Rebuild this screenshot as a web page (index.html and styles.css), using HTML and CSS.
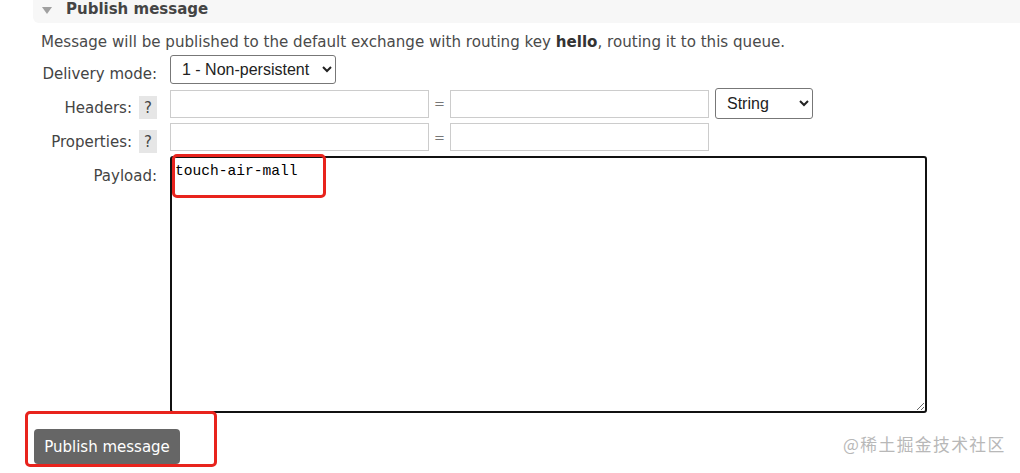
FILE: index.html
```html
<!DOCTYPE html>
<html>
<head>
<meta charset="utf-8">
<link rel="stylesheet" href="styles.css">
</head>
<body>
<div class="section">
  <div class="section-head">
    <span class="tri"></span>
    <h2>Publish message</h2>
  </div>
  <div class="section-body">
    <p class="desc">Message will be published to the default exchange with routing key <b>hello</b>, routing it to this queue.</p>
    <div class="form">
      <label class="lbl lbl-mode">Delivery mode:</label>
      <div class="field">
        <select class="sel sel-mode"><option>1 - Non-persistent</option><option>2 - Persistent</option></select>
      </div>

      <label class="lbl lbl-headers">Headers: <span class="help">?</span></label>
      <div class="field kv">
        <input class="txt" type="text"><span class="eq">=</span><input class="txt" type="text">
        <select class="sel sel-type"><option>String</option><option>Number</option><option>Boolean</option></select>
      </div>

      <label class="lbl lbl-props">Properties: <span class="help">?</span></label>
      <div class="field kv">
        <input class="txt" type="text"><span class="eq">=</span><input class="txt" type="text">
      </div>

      <label class="lbl lbl-payload">Payload:</label>
      <div class="field payload-wrap">
        <textarea class="payload">touch-air-mall</textarea>
        <span class="mark mark-text"></span>
      </div>
    </div>
    <div class="actions">
      <button class="btn">Publish message</button>
      <span class="mark mark-btn"></span>
    </div>
  </div>
  <div class="watermark">@稀土掘金技术社区</div>
</div>
</body>
</html>
```

FILE: styles.css
```css
html, body {
  margin: 0;
  padding: 0;
  background: #fff;
}
body {
  font-family: "DejaVu Sans", Verdana, sans-serif;
  color: #484848;
  width: 1020px;
  height: 473px;
  overflow: hidden;
}
.section {
  position: relative;
  margin-left: 33px;
  height: 473px;
}
.section-head {
  display: flex;
  align-items: center;
  height: 23px;
  background: #f7f7f7;
  border-bottom-left-radius: 6px;
  padding-left: 9px;
}
.tri {
  width: 0;
  height: 0;
  border-left: 5px solid transparent;
  border-right: 5px solid transparent;
  border-top: 7px solid #a0a0a0;
  margin-top: -3px;
  margin-right: 14px;
}
.section-head h2 {
  margin: 0;
  font-size: 15px;
  font-weight: bold;
  color: #444;
  margin-top: -5px;
}
.section-body {
  padding-left: 8px;
}
.desc {
  margin: 0;
  padding-top: 10px;
  font-size: 15.1px;
  line-height: 18px;
  color: #4a4a4a;
}
.desc b {
  color: #333;
}
.form {
  display: grid;
  grid-template-columns: 116px 1fr;
  column-gap: 13px;
  row-gap: 4px;
  margin-top: 4px;
  align-items: start;
}
.lbl {
  font-size: 15px;
  line-height: 18px;
  color: #444;
  text-align: right;
  display: flex;
  justify-content: flex-end;
  align-items: center;
  gap: 7px;
  white-space: nowrap;
  margin-bottom: -6px;
}
.lbl-mode {
  padding-top: 10px;
}
.lbl-headers {
  padding-top: 8px;
}
.lbl-props {
  padding-top: 7px;
}
.lbl-payload {
  padding-top: 12px;
}
.help {
  display: inline-flex;
  align-items: center;
  justify-content: center;
  width: 18px;
  height: 23px;
  background: #e6e6e6;
  color: #444;
  font-size: 15px;
}
.field {
  display: flex;
  align-items: center;
}
.sel {
  font-family: "Liberation Sans", Arial, sans-serif;
  font-size: 16px;
  color: #222;
  background: #fff;
  border: 1px solid #777;
  border-radius: 3px;
  padding: 0 4px 0 7px;
}
.sel-mode {
  width: 166px;
  height: 29px;
}
.sel-type {
  width: 98px;
  height: 31px;
  margin-left: 6px;
}
.txt {
  width: 259px;
  height: 28px;
  box-sizing: border-box;
  border: 1px solid #ccc;
  padding: 0 4px;
  margin: 0;
  font-size: 13px;
}
.eq {
  width: 21px;
  text-align: center;
  font-size: 13px;
  color: #777;
}
.payload-wrap {
  position: relative;
  margin-top: 1px;
}
.payload {
  box-sizing: border-box;
  width: 757px;
  height: 257px;
  border: 2px solid #111;
  border-radius: 3px;
  margin: 0;
  padding: 3px 3px 2px;
  font-family: "Liberation Mono", "Courier New", monospace;
  font-size: 14.6px;
  line-height: 20px;
  color: #000;
  resize: both;
  outline: none;
}
.mark {
  position: absolute;
  border: 3px solid #e8231d;
  border-radius: 5px;
  pointer-events: none;
}
.mark-text {
  left: 2px;
  top: -2px;
  width: 148px;
  height: 38px;
}
.actions {
  position: relative;
  margin-top: 16px;
}
.btn {
  display: block;
  margin-left: -7px;
  height: 35px;
  width: 146px;
  background: #666;
  color: #fff;
  border: none;
  border-radius: 4px;
  font-family: "DejaVu Sans", Verdana, sans-serif;
  font-size: 15px;
  padding: 0;
  cursor: pointer;
}
.mark-btn {
  left: -16px;
  top: -18px;
  width: 186px;
  height: 50px;
}
.watermark {
  position: absolute;
  left: 810px;
  top: 432px;
  font-family: "Noto Sans CJK SC", sans-serif;
  font-size: 16.8px;
  color: #b8b8b8;
  letter-spacing: 1.4px;
}
```
